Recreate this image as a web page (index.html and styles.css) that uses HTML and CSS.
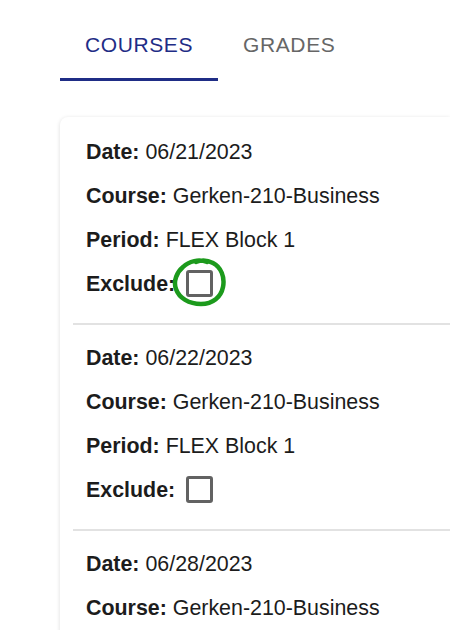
FILE: index.html
```html
<!DOCTYPE html>
<html lang="en">
<head>
<meta charset="utf-8">
<title>Courses</title>
<link rel="stylesheet" href="styles.css">
</head>
<body>
<div class="page">
  <nav class="tabs">
    <div class="tab active">COURSES</div>
    <div class="tab">GRADES</div>
  </nav>
  <div class="card">
    <section class="entry first">
      <div class="row"><b>Date:</b> 06/21/2023</div>
      <div class="row"><b>Course:</b> Gerken-210-Business</div>
      <div class="row"><b>Period:</b> FLEX Block 1</div>
      <div class="row"><b>Exclude:</b> <span class="check-wrap"><span class="check"></span><svg class="mark" width="60" height="52" viewBox="0 0 60 52"><path d="M36 5 C 28 2, 18 4, 12 10 C 6 15, 2 24, 5 32 C 8 41, 18 47, 30 47 C 42 47, 50 40, 52 30 C 54 20, 50 10, 42 6 C 36 3, 30 3, 25 5" fill="none" stroke="#1c9a1c" stroke-width="4.5" stroke-linecap="round" stroke-linejoin="round"/></svg></span></div>
    </section>
    <section class="entry">
      <div class="row"><b>Date:</b> 06/22/2023</div>
      <div class="row"><b>Course:</b> Gerken-210-Business</div>
      <div class="row"><b>Period:</b> FLEX Block 1</div>
      <div class="row"><b>Exclude:</b> <span class="check-wrap"><span class="check"></span></span></div>
    </section>
    <section class="entry last">
      <div class="row"><b>Date:</b> 06/28/2023</div>
      <div class="row"><b>Course:</b> Gerken-210-Business</div>
    </section>
  </div>
</div>
</body>
</html>
```
FILE: styles.css
```css
html, body {
  margin: 0;
  padding: 0;
  background: #ffffff;
  overflow: hidden;
}
body {
  width: 450px;
  height: 630px;
  font-family: "Liberation Sans", Arial, sans-serif;
  color: #1c1c1c;
}
.page {
  padding-left: 60px;
}
.tabs {
  display: flex;
}
.tab {
  padding: 33px 25px 21px;
  font-size: 21px;
  line-height: 24px;
  letter-spacing: 0.6px;
  color: #666666;
  border-bottom: 3px solid transparent;
}
.tab.active {
  color: #1f2d86;
  border-bottom-color: #1f2d86;
}
.card {
  margin-top: 36px;
  width: 390px;
  box-sizing: border-box;
  border-radius: 8px 0 0 8px;
  box-shadow: 0 1px 4px rgba(0, 0, 0, 0.14);
  padding-left: 13px;
  background: #fff;
}
.entry {
  display: flex;
  flex-direction: column;
  gap: 20px;
  padding: 21px 0 27px 13px;
  border-top: 2px solid #e2e2e2;
}
.entry.first {
  border-top: none;
  padding-top: 23px;
}
.entry.last {
  padding-bottom: 20px;
}
.row {
  font-size: 21.4px;
  line-height: 24px;
  height: 24px;
  white-space: nowrap;
}
.row b {
  font-weight: 700;
}
.check-wrap {
  position: relative;
  display: inline-block;
  vertical-align: top;
  margin-top: -2px;
  margin-left: 5px;
  width: 27px;
  height: 27px;
}
.check {
  display: block;
  box-sizing: border-box;
  width: 27px;
  height: 27px;
  border: 3px solid #626262;
  border-radius: 3px;
}
.mark {
  position: absolute;
  left: -15px;
  top: -13px;
}
```
